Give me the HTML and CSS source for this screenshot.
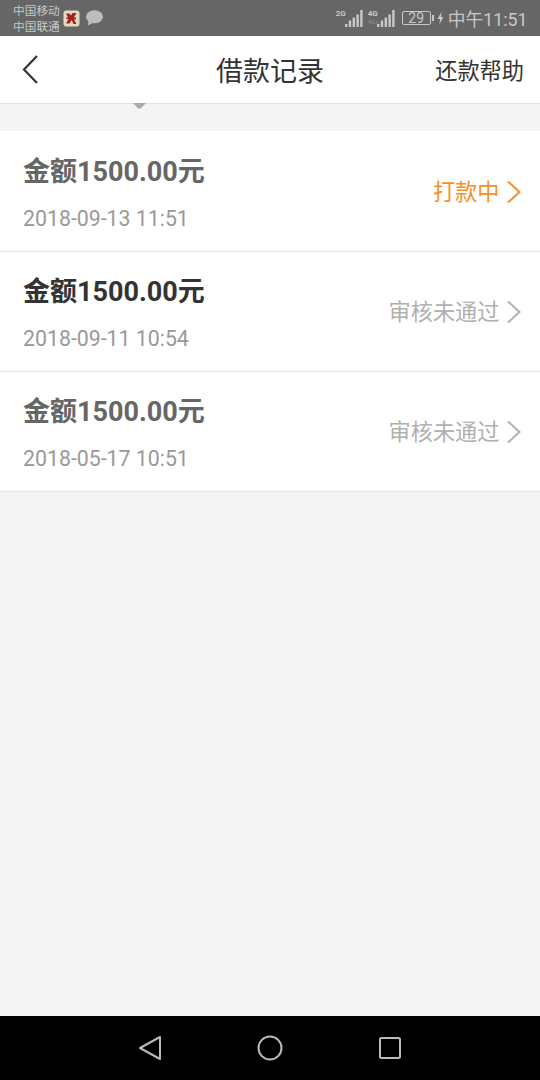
FILE: index.html
```html
<!DOCTYPE html>
<html lang="zh-CN">
<head>
  <meta charset="UTF-8"/>
  <title>借款记录</title>
  <link rel="stylesheet" href="styles.css">
</head>
<body>
<div class="phone">
  <div class="statusbar">
    <div class="status-left">
      <div class="carriers"><span>中国移动</span><span>中国联通</span></div>
      <svg class="app-icon" width="17" height="17" viewBox="0 0 17 17">
        <rect x="0.5" y="0.5" width="16" height="16" rx="3" fill="#e2dac2"/>
        <path d="M3 3.500h3.500l1.500 2 1.500-2.500h4l-2.500 4.500h2v2h-2l2.500 4.500h-3L8.500 10l-2 3.500H3l2.500-4.500H3.500L3 7.500h2z" fill="#a5211d"/>
      </svg>
      <svg class="chat-icon" width="18" height="16" viewBox="0 0 18 16">
        <ellipse cx="9.500" cy="6.800" rx="8.500" ry="6.500" fill="#bdbdbd"/>
        <path d="M3.500 10.500l-.5 5 5-2.800z" fill="#bdbdbd"/>
      </svg>
    </div>
    <div class="status-right">
      <div class="signal">
        <span class="net">2G</span>
        <svg width="18" height="17" viewBox="0 0 18 17"><path d="M1.200 14v3M5 10.500V17M8.800 7.500V17M12.600 4.500V17M16.400 0V17" stroke="#c8c8c8" stroke-width="2.400" fill="none"/></svg>
      </div>
      <div class="signal second">
        <span class="net">4G<i>4G+</i></span>
        <svg width="18" height="17" viewBox="0 0 18 17"><path d="M1.200 14v3M5 10.500V17M8.800 7.500V17M12.600 4.500V17M16.400 0V17" stroke="#c8c8c8" stroke-width="2.400" fill="none"/></svg>
      </div>
      <div class="battery"><span>29</span></div>
      <svg class="bolt" width="7" height="12" viewBox="0 0 7 12"><path d="M4.500 0L0.500 7h2.500L2.500 12l4-7H4z" fill="#c8c8c8"/></svg>
      <span class="clock">中午11:51</span>
    </div>
  </div>

  <header class="topbar">
    <svg class="back" width="18" height="30" viewBox="0 0 18 30"><path d="M16 2L3 15.500 16 29" stroke="#333" stroke-width="2.200" fill="none"/></svg>
    <h1>借款记录</h1>
    <a class="help">还款帮助</a>
    <span class="marker"></span>
  </header>

  <div class="list">
    <div class="row">
      <div class="info">
        <div class="amount dim">金额1500.00元</div>
        <div class="date">2018-09-13 11:51</div>
      </div>
      <div class="state orange"><span>打款中</span>
        <svg width="16" height="24" viewBox="0 0 16 24"><path d="M2 1.500L13.500 12 2 22.500" stroke="currentColor" stroke-width="2" fill="none"/></svg>
      </div>
    </div>
    <div class="row">
      <div class="info">
        <div class="amount">金额1500.00元</div>
        <div class="date">2018-09-11 10:54</div>
      </div>
      <div class="state"><span>审核未通过</span>
        <svg width="16" height="24" viewBox="0 0 16 24"><path d="M2 1.500L13.500 12 2 22.500" stroke="currentColor" stroke-width="2" fill="none"/></svg>
      </div>
    </div>
    <div class="row">
      <div class="info">
        <div class="amount dim">金额1500.00元</div>
        <div class="date">2018-05-17 10:51</div>
      </div>
      <div class="state"><span>审核未通过</span>
        <svg width="16" height="24" viewBox="0 0 16 24"><path d="M2 1.500L13.500 12 2 22.500" stroke="currentColor" stroke-width="2" fill="none"/></svg>
      </div>
    </div>
  </div>

  <div class="spacer"></div>

  <div class="navbar">
    <svg width="24" height="26" viewBox="0 0 24 26"><path d="M22 2v22L2 13z" stroke="#bbb" stroke-width="2" stroke-linejoin="round" fill="none"/></svg>
    <svg width="26" height="26" viewBox="0 0 26 26"><circle cx="13" cy="13" r="11.500" stroke="#bbb" stroke-width="2" fill="none"/></svg>
    <svg width="24" height="24" viewBox="0 0 24 24"><rect x="2" y="2" width="20" height="20" rx="1.500" stroke="#bbb" stroke-width="2" fill="none"/></svg>
  </div>
</div>
</body>
</html>
```

FILE: styles.css
```css
* { box-sizing: border-box; margin: 0; padding: 0; }
body { width: 540px; height: 1080px; overflow: hidden; background: #f4f4f4; font-family: Roboto, "Noto Sans CJK SC", sans-serif; }
.phone { width: 540px; height: 1080px; display: flex; flex-direction: column; }

.statusbar { height: 36px; background: #666; color: #c8c8c8; display: flex; justify-content: space-between; align-items: center; padding: 0 12.500px 0 13px; }
.status-left, .status-right { display: flex; align-items: center; }
.carriers { display: flex; flex-direction: column; font-size: 11.700px; line-height: 16.500px; width: 50px; padding-top: 2px; }
.chat-icon { margin-left: 5px; }
.signal { display: flex; align-items: flex-end; margin-right: 5px; height: 17px; margin-top: 1px; }
.signal.second { margin-right: 7px; }
.net { font-size: 8px; font-weight: bold; line-height: 8px; width: 9px; align-self: flex-start; white-space: nowrap; }
.net i { display: block; font-size: 6px; font-style: normal; font-weight: normal; line-height: 8px; opacity: 0.4; }
.battery { width: 29px; height: 14px; border: 1px solid #c8c8c8; border-radius: 2px; font-size: 14px; line-height: 12px; text-align: center; position: relative; margin-right: 6px; }
.battery::after { content: ""; position: absolute; right: -4px; top: 3px; width: 2px; height: 6px; background: #c8c8c8; }
.bolt { margin-right: 4px; }
.clock { font-size: 17.800px; }

.topbar { height: 68px; background: #fff; border-bottom: 1px solid #e2e2e2; display: flex; align-items: center; position: relative; padding: 0 16px 0 21px; justify-content: space-between; }
.back { margin-top: -1px; }
.topbar h1 { font-size: 27px; font-weight: normal; color: #333; position: absolute; left: 0; right: 0; text-align: center; pointer-events: none; }
.help { font-size: 22.200px; color: #333; margin-top: -2px; }
.marker { position: absolute; left: 133px; bottom: -6px; width: 13px; height: 6px; background: #aaa; clip-path: polygon(0 0, 100% 0, 60% 90%, 40% 90%); }

.list { margin-top: 27px; padding-top: 1px; background: #fff; border-bottom: 1px solid #e2e2e2; }
.row { height: 120px; display: flex; justify-content: space-between; align-items: center; padding: 0 18px 0 23px; border-bottom: 1px solid #e6e6e6; }
.row:last-child { border-bottom: none; height: 119px; }
.amount { font-size: 27px; font-weight: bold; color: #333; line-height: 36px; padding-top: 3px; }
.amount.dim { color: #666; }
.date { font-size: 21.300px; color: #999; line-height: 28px; margin-top: 15px; }
.state { display: flex; align-items: center; gap: 6.500px; font-size: 22.200px; color: #b0b0b0; }
.state span { padding-bottom: 4px; }
.state.orange { color: #f39224; }

.spacer { flex: 1; }
.navbar { height: 64px; background: #000; display: flex; align-items: center; justify-content: space-between; padding: 0 138px; }
```
